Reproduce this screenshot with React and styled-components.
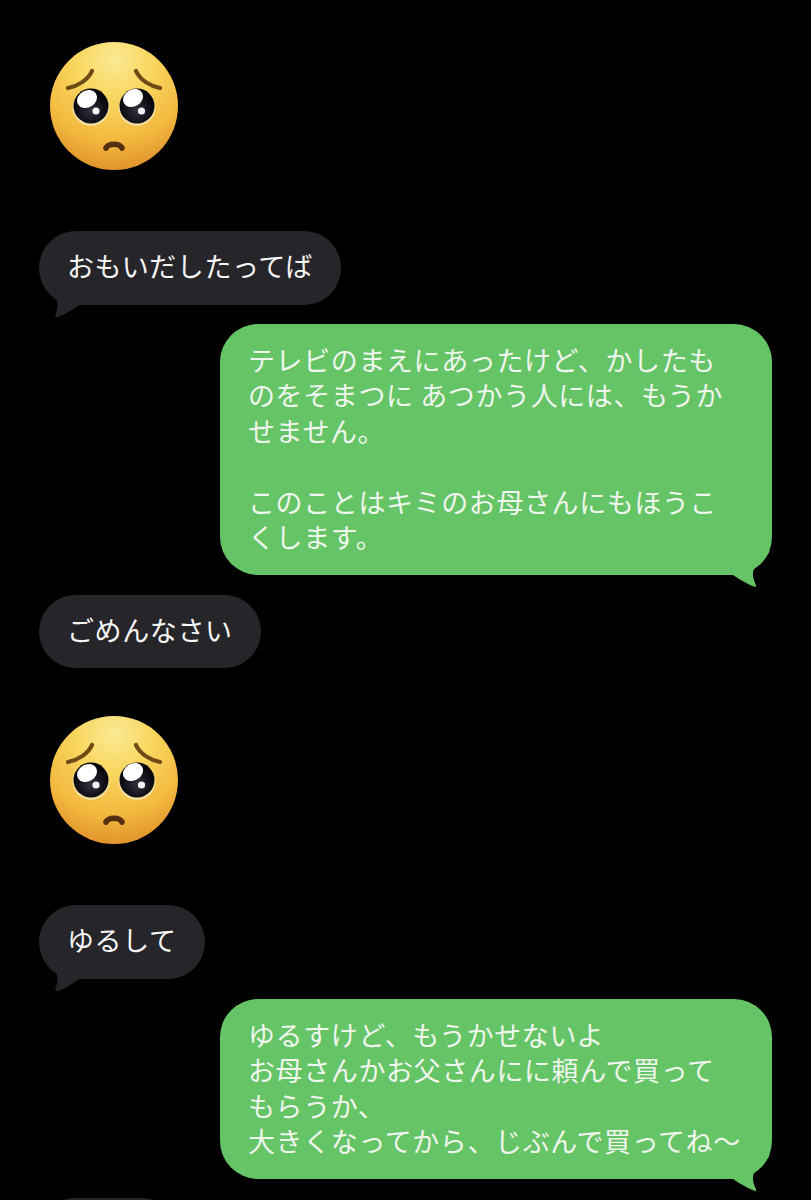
import React from 'react'
import styled, { createGlobalStyle } from 'styled-components'

const GlobalStyle = createGlobalStyle`
  html, body {
    margin: 0;
    background: #000;
  }
  body {
    height: 1200px;
    overflow: hidden;
  }
`

function PleadingFace({ id }) {
  return (
    <FaceSvg viewBox="0 0 128 128">
      <defs>
        <radialGradient id={id + 'skin'} cx="50%" cy="14%" r="92%">
          <stop offset="0" stopColor="#fbe994" />
          <stop offset="0.32" stopColor="#f9d760" />
          <stop offset="0.68" stopColor="#f3b93f" />
          <stop offset="1" stopColor="#dc8a26" />
        </radialGradient>
        <radialGradient id={id + 'eye'} cx="50%" cy="62%" r="55%">
          <stop offset="0" stopColor="#33313f" />
          <stop offset="0.7" stopColor="#100f16" />
          <stop offset="1" stopColor="#040406" />
        </radialGradient>
      </defs>
      <circle cx="64" cy="64" r="64" fill={`url(#${id}skin)`} />
      <path d="M18 46 C28 44 38 38 42 29" fill="none" stroke="#6e4a14" strokeWidth="4.2" strokeLinecap="round" />
      <path d="M110 46 C100 44 90 38 86 29" fill="none" stroke="#6e4a14" strokeWidth="4.2" strokeLinecap="round" />
      <circle cx="41" cy="65.500" r="18.500" fill="#f4dfa0" />
      <circle cx="87" cy="65.500" r="18.500" fill="#f4dfa0" />
      <circle cx="41" cy="64" r="17.500" fill={`url(#${id}eye)`} />
      <circle cx="87" cy="64" r="17.500" fill={`url(#${id}eye)`} />
      <ellipse cx="37" cy="57" rx="10.500" ry="8.500" fill="#fff" transform="rotate(-30 37 57)" />
      <ellipse cx="83" cy="56" rx="10.500" ry="8.500" fill="#fff" transform="rotate(-30 83 56)" />
      <circle cx="46" cy="69" r="3.600" fill="#f4f2f2" />
      <circle cx="91.500" cy="69" r="3.600" fill="#f4f2f2" />
      <path d="M56 106 C59 101 69 101 72 106" fill="none" stroke="#54300f" strokeWidth="5.600" strokeLinecap="round" />
    </FaceSvg>
  )
}

function TailLeft() {
  return (
    <TailLeftSvg viewBox="0 0 44 24">
      <path d="M1 0 C3 2 6 3 7.700 5 C9 9 8.500 14 7 18 C5.500 21 6 22.500 9 22 C16 20 24 14 31 10 L44 0 Z" fill="#262529" />
    </TailLeftSvg>
  )
}

function TailRight() {
  return (
    <TailRightSvg viewBox="0 0 44 40">
      <path d="M41 2 C38 10 30 16 25 21 C23 25 24 30 26 35 C28 39 27 39.500 25 38.500 C18 36 10 31 4 27 L0 20 L30 10 Z" fill="#65c466" />
    </TailRightSvg>
  )
}

export default function App() {
  return (
    <Page>
      <GlobalStyle />
      <Emoji>
        <PleadingFace id="a" />
      </Emoji>
      <Received $gap={61}>
        おもいだしたってば
        <TailLeft />
      </Received>
      <Sent $gap={19}>
        テレビのまえにあったけど、かしたも<br />
        のをそまつに あつかう人には、もうか<br />
        せません。<br />
        <br />
        このことはキミのお母さんにもほうこ<br />
        くします。
        <TailRight />
      </Sent>
      <Received $gap={20}>ごめんなさい</Received>
      <Emoji $gap={48}>
        <PleadingFace id="b" />
      </Emoji>
      <Received $gap={61}>
        ゆるして
        <TailLeft />
      </Received>
      <Sent $gap={20}>
        ゆるすけど、もうかせないよ<br />
        お母さんかお父さんにに頼んで買って<br />
        もらうか、<br />
        大きくなってから、じぶんで買ってね〜
        <TailRight />
      </Sent>
      <Received $gap={19}>　　　</Received>
    </Page>
  )
}

const Page = styled.div`
  width: 811px;
  height: 1200px;
  box-sizing: border-box;
  overflow: hidden;
  background: #000;
  padding: 42px 39px 0;
  display: flex;
  flex-direction: column;
  align-items: flex-start;
  font-family: "Noto Sans CJK JP", "Noto Sans", sans-serif;
  font-size: 27px;
  line-height: 35.5px;
  letter-spacing: 0.6px;
`

const Emoji = styled.div`
  flex: none;
  margin-top: ${(p) => p.$gap || 0}px;
  margin-left: 11px;
  width: 128px;
  height: 128px;
`

const FaceSvg = styled.svg`
  display: block;
  width: 128px;
  height: 128px;
  filter: blur(0.5px);
`

const Bubble = styled.div`
  position: relative;
  flex: none;
  margin-top: ${(p) => p.$gap}px;
  padding: 17px 28px 21px 28px;
  border-radius: 37px;
  white-space: pre;
`

const Received = styled(Bubble)`
  background: #262529;
  color: #f6f6f6;
`

const Sent = styled(Bubble)`
  align-self: flex-end;
  width: 552px;
  box-sizing: border-box;
  padding-top: 18px;
  padding-bottom: 20px;
  border-radius: 38px;
  background: #65c466;
  color: #eff6ed;
`

const TailLeftSvg = styled.svg`
  position: absolute;
  left: 10px;
  bottom: -14px;
  width: 44px;
  height: 24px;
`

const TailRightSvg = styled.svg`
  position: absolute;
  right: -1px;
  bottom: -13px;
  width: 44px;
  height: 40px;
`
